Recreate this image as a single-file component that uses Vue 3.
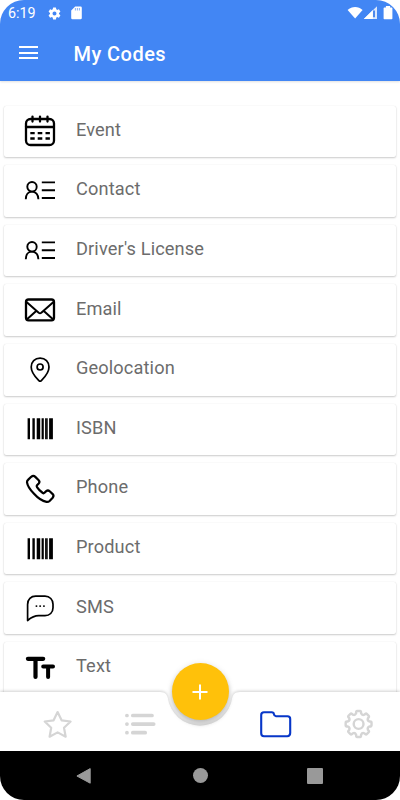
<template>
  <div class="phone">
    <header class="app-header">
      <div class="status-bar">
        <span class="time">6:19</span>
        <svg class="status-gear" viewBox="0 0 24 24" width="15" height="15">
          <path fill="#fff" d="M19.14 12.94c.04-.3.06-.61.06-.94 0-.32-.02-.64-.07-.94l2.03-1.58a.49.49 0 0 0 .12-.61l-1.92-3.32a.49.49 0 0 0-.59-.22l-2.39.96a7 7 0 0 0-1.62-.94l-.36-2.54a.48.48 0 0 0-.48-.41h-3.84a.48.48 0 0 0-.47.41l-.36 2.54c-.59.24-1.13.57-1.62.94l-2.39-.96a.48.48 0 0 0-.59.22L2.74 8.87a.48.48 0 0 0 .12.61l2.03 1.58c-.05.3-.09.63-.09.94s.02.64.07.94l-2.03 1.58a.49.49 0 0 0-.12.61l1.92 3.32c.12.22.37.29.59.22l2.39-.96c.5.38 1.03.7 1.62.94l.36 2.54c.05.24.24.41.48.41h3.84c.24 0 .44-.17.47-.41l.36-2.54c.59-.24 1.13-.56 1.62-.94l2.39.96c.22.08.47 0 .59-.22l1.92-3.32a.48.48 0 0 0-.12-.61zM12 15.2a3.2 3.2 0 1 1 0-6.4 3.2 3.2 0 0 1 0 6.4z" />
        </svg>
        <svg class="status-sd" viewBox="0 0 11 14" width="11" height="14">
          <path fill="#fff" d="M4.2.5H9.6A1.2 1.2 0 0 1 10.8 1.7V12A1.2 1.2 0 0 1 9.6 13.2H1.4A1.2 1.2 0 0 1 .2 12V4.5z" />
          <path stroke="#4286f4" stroke-opacity=".6" stroke-width="1.1" d="M4.4 2v2.6M6.4 2v2.6M8.4 2v2.6" />
        </svg>
        <div class="signals">
          <svg viewBox="0 0 46 16" width="46" height="16">
            <path fill="#fff" d="M.6 5C4.8.9 11.4.9 15.6 5L8.1 13.6z" />
            <path fill="#fff" fill-opacity=".8" d="M16.8 13.9L30 1.2V13.9z" />
            <path fill="#fff" d="M16.8 13.9L25.8 5V13.9z" />
            <path stroke="#2b72e8" stroke-width="1.6" d="M27 5.4v6.8" />
            <path fill="#fff" d="M37.4 2.4h1.5V1h4.2v1.4h1.5a.8.8 0 0 1 .8.8v10.2a.8.8 0 0 1-.8.8h-7.2a.8.8 0 0 1-.8-.8V3.2a.8.8 0 0 1 .8-.8z" />
          </svg>
        </div>
      </div>
      <div class="toolbar">
        <div class="menu-icon"><i></i><i></i><i></i></div>
        <h1>My Codes</h1>
      </div>
    </header>

    <main class="code-list">
      <div v-for="item in items" :key="item.label" class="code-card">
        <svg class="code-icon" viewBox="0 0 32 32" width="32" height="32" fill="none" stroke="#000" stroke-linecap="round" stroke-linejoin="round">
          <g v-if="item.icon === 'calendar'" stroke-width="2.3">
            <rect x="2" y="4" width="28" height="26" rx="4.5" />
            <path d="M2 12h28M8.5 1.6v5M16 1.6v5M23.5 1.6v5" />
            <path stroke-linecap="butt" d="M6.3 18.2h4.4M13.7 18.2h4.6M21.5 18.2h4.4M6.3 23.5h4.4M13.7 23.5h4.6M21.5 23.5h4.4" />
          </g>
          <g v-else-if="item.icon === 'contact'" stroke-width="1.9" stroke-linecap="butt">
            <ellipse cx="8" cy="11.8" rx="4.7" ry="4.8" />
            <path d="M1.8 24.2C1.8 19.6 4.4 16.6 8 16.6s6.4 3 6.4 7.6M17.8 7.4H31M17.8 15.2H31M17.8 23H31" />
          </g>
          <g v-else-if="item.icon === 'mail'" stroke-width="2.3">
            <rect x="2" y="5.5" width="28" height="20.8" rx="2.5" />
            <path stroke-width="2" d="M2.8 8.2L14.7 18.7Q16 19.7 17.3 18.7L29.2 8.2M3 25.3L12.2 17M29 25.3L19.8 17" />
          </g>
          <g v-else-if="item.icon === 'pin'" stroke-width="1.7">
            <path d="M16.1 4.1C10.8 4.1 7.2 8 7.2 13c0 6.2 4.6 10.4 7.7 13.6q1.2 1.3 2.4 0C20.4 23.4 25 19.2 25 13c0-5-3.6-8.9-8.9-8.9z" />
            <circle cx="16.1" cy="13" r="3" />
          </g>
          <g v-else-if="item.icon === 'barcode'" fill="#000" stroke="none">
            <path d="M3.6 5.2H6v21H3.6zM8.4 5.2h2.4v21H8.4zM12.7 5.2h3.5v21h-3.5zM17.6 5.2h2.2v21h-2.2zM21.1 5.2h1.8v21h-1.8zM23.3 5.2h.7v21h-.7zM25.1 5.2h3.8v21h-3.8z" />
          </g>
          <g v-else-if="item.icon === 'phone'" stroke-width="2.2">
            <path d="M7.2 3.8Q9.4 2 11.3 3.9L14.7 7.2Q16.2 8.8 14.7 10.5L13 12.3Q12.3 13.2 13 14.2C14.5 16.6 16.5 18.5 18.8 20Q19.7 20.6 20.5 19.8L22.2 18.1Q24 16.8 25.7 18.3L28.7 21.1Q30.3 22.9 28.7 24.8L25.6 28Q24.4 29.1 22.5 28.9C18 28 13.4 24.5 9.8 20.5C6.2 16.7 3.6 13.4 3 9.3Q2.9 7.9 4 6.9z" />
          </g>
          <g v-else-if="item.icon === 'chat'" stroke-width="1.7">
            <path d="M3.6 28.5V12.4C3.6 7.4 7 4.2 11.7 4.2H21C25.8 4.2 29 7.7 29 12.2v3.5c0 4.8-3.4 8-8 8h-6.3C10.3 23.7 6.6 26 3.6 28.5z" />
            <path stroke-width="1.9" d="M12.4 14.1h.1M16.1 14.1h.1M19.9 14.1h.1" />
          </g>
          <g v-else stroke-width="4.2">
            <path d="M3.9 6.8H19.2M11.5 6.8V24.9" />
            <path stroke-width="4" d="M19.2 14.5H29M24.1 14.5V25" />
          </g>
        </svg>
        <span class="code-label">{{ item.label }}</span>
      </div>
    </main>

    <nav class="tab-bar">
      <svg class="tab-shape" viewBox="0 0 400 60" width="400" height="60">
        <path fill="#fff" d="M0 0H160C165.5 0 166.8 2.8 167.7 5.5A32.6 32.6 0 0 0 232.3 5.5C233.2 2.8 234.5 0 240 0H400V60H0z" />
      </svg>
      <button class="fab">
        <svg viewBox="0 0 16 16" width="16" height="16"><path stroke="#fff" stroke-width="2" d="M.5 8h15M8 .5v15" /></svg>
      </button>
      <div class="tabs">
        <svg viewBox="0 0 32 32" width="32" height="32" fill="none" stroke="#d5d5d5" stroke-width="2.2" stroke-linejoin="round">
          <path d="M15.6 4.1L19.6 12.3L28.6 13.5L22 19.8L23.7 28.7L15.6 24.4L7.6 28.7L9.2 19.8L2.7 13.5L11.6 12.3z" />
        </svg>
        <svg viewBox="0 0 32 32" width="32" height="32" fill="none" stroke="#d5d5d5" stroke-width="3.7" stroke-linecap="round">
          <path d="M2.9 7.5h.1M8.8 7.5H28M2.9 16.1h.1M8.8 16.1H29.7M2.9 24.7h.1M8.8 24.7H21.2" />
        </svg>
        <span class="tab-gap"></span>
        <svg viewBox="0 0 32 32" width="32" height="32" fill="none" stroke="#0736c8" stroke-width="2.1" stroke-linejoin="round">
          <path d="M4 4.3H11.7Q13.7 4.3 13.9 6.2T16 8.3H27.5Q30.2 8.3 30.2 11V25.1Q30.2 28.2 27.3 28.2H4Q1.2 28.2 1.2 25.3V7Q1.2 4.3 4 4.3z" />
        </svg>
        <svg viewBox="0 0 32 32" width="32" height="32" fill="none" stroke="#d5d5d5" stroke-width="2.4" stroke-linejoin="round">
          <path :d="gearPath" />
          <circle cx="16.6" cy="16" r="4.9" />
        </svg>
      </div>
    </nav>

    <footer class="system-nav">
      <svg viewBox="0 0 16 18" width="16" height="18"><path fill="#999" stroke="#999" stroke-linejoin="round" d="M.9 9L14.2 1.6V16.2z" /></svg>
      <span class="home-dot"></span>
      <span class="recent-square"></span>
    </footer>
  </div>
</template>

<script setup>
const items = [
  { label: 'Event', icon: 'calendar' },
  { label: 'Contact', icon: 'contact' },
  { label: "Driver's License", icon: 'contact' },
  { label: 'Email', icon: 'mail' },
  { label: 'Geolocation', icon: 'pin' },
  { label: 'ISBN', icon: 'barcode' },
  { label: 'Phone', icon: 'phone' },
  { label: 'Product', icon: 'barcode' },
  { label: 'SMS', icon: 'chat' },
  { label: 'Text', icon: 'text' }
]

// Outline of the settings gear: eight teeth around the center
const point = (radius, deg) => {
  const a = (deg * Math.PI) / 180
  return `${(16.6 + radius * Math.sin(a)).toFixed(2)} ${(16 - radius * Math.cos(a)).toFixed(2)}`
}

const teeth = []
for (let i = 0; i < 8; i++) {
  const c = i * 45
  teeth.push(
    `${i ? 'L' : 'M'}${point(11, c - 13)}`,
    `Q${point(13.2, c - 12)} ${point(13, c - 6)}`,
    `L${point(13, c + 6)}`,
    `Q${point(13.2, c + 12)} ${point(11, c + 13)}`,
    `Q${point(9.2, c + 22.5)} ${point(11, c + 32)}`
  )
}
const gearPath = teeth.join('') + 'z'
</script>

<style>
body {
  background: #fff;
  overflow: hidden;
}
</style>

<style scoped>
.phone {
  width: 400px;
  height: 800px;
  display: flex;
  flex-direction: column;
  overflow: hidden;
  border-radius: 24px;
  background: #fff;
  font-family: Roboto, sans-serif;
}

.app-header {
  flex: none;
  height: 81px;
  background: #4286f4;
  color: #fff;
  box-shadow: 0 1px 2px rgba(0, 0, 0, 0.12);
}

.status-bar {
  display: flex;
  align-items: center;
  height: 26px;
  padding-left: 8px;
}

.time {
  width: 39px;
  font-size: 14.3px;
}

.status-sd {
  margin-left: 9px;
}

.signals {
  display: flex;
  margin: -1px 7px 0 auto;
}

.toolbar {
  display: flex;
  align-items: center;
  height: 55px;
  padding-left: 19px;
}

.menu-icon {
  display: flex;
  flex-direction: column;
  gap: 3.5px;
  width: 19px;
  margin-top: -2px;
}

.menu-icon i {
  height: 2px;
  background: #fff;
}

h1 {
  margin: 0 0 0 35.5px;
  font-size: 20px;
  font-weight: 500;
  letter-spacing: 0.45px;
}

.code-list {
  flex: 1;
  min-height: 0;
  display: flex;
  flex-direction: column;
  gap: 8px;
  padding: 24.7px 4px 0;
  overflow: hidden;
}

.code-card {
  flex: none;
  display: flex;
  align-items: center;
  height: 51.6px;
  padding-left: 20px;
  border-radius: 2px;
  background: #fff;
  box-shadow: 0 1px 2px rgba(0, 0, 0, 0.2), 0 0 1px rgba(0, 0, 0, 0.12);
}

.code-label {
  margin: 0 0 4.2px 20px;
  color: #6c6c6c;
  font-size: 18.2px;
  letter-spacing: 0.13px;
}

.tab-bar {
  position: relative;
  flex: none;
  height: 59px;
}

.tab-shape {
  position: absolute;
  top: 0;
  left: 0;
  overflow: visible;
  filter: drop-shadow(0 -1px 1.5px rgba(0, 0, 0, 0.18));
}

.fab {
  position: absolute;
  top: -29px;
  left: 171.5px;
  display: flex;
  align-items: center;
  justify-content: center;
  width: 57px;
  height: 57px;
  padding: 0;
  border: none;
  border-radius: 50%;
  background: #ffc10a;
  box-shadow: 0 4px 5px rgba(0, 0, 0, 0.2), 0 1px 6px rgba(0, 0, 0, 0.12);
}

.tabs {
  position: relative;
  display: flex;
  justify-content: space-between;
  padding: 16px 26px 0 42px;
}

.tab-gap {
  width: 4px;
}

.system-nav {
  z-index: 1;
  flex: none;
  display: flex;
  align-items: center;
  justify-content: space-between;
  height: 49px;
  padding: 0 77px 0 76px;
  box-sizing: border-box;
  background: #000;
}

.home-dot {
  width: 15px;
  height: 15px;
  margin-left: 1px;
  border-radius: 50%;
  background: #999;
}

.recent-square {
  width: 16px;
  height: 16px;
  border-radius: 1px;
  background: #999;
}
</style>
